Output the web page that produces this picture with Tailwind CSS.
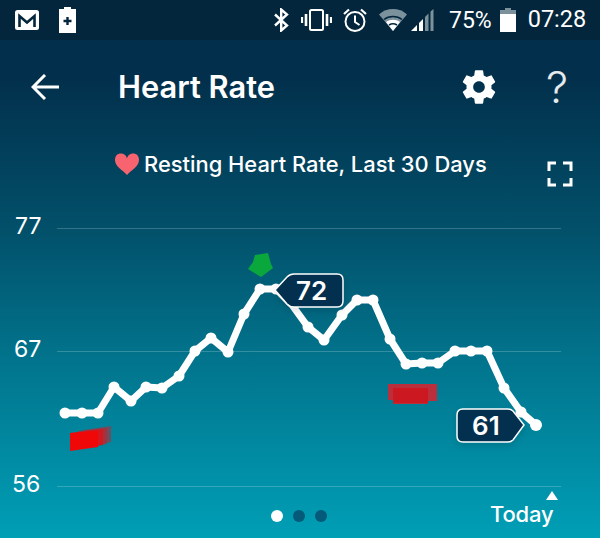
<!DOCTYPE html>
<html lang="en">
<head>
  <meta charset="UTF-8">
  <meta name="viewport" content="width=device-width, initial-scale=1.0">
  <title>Heart Rate</title>
  <script src="https://cdn.jsdelivr.net/npm/@tailwindcss/browser@4"></script>
</head>
<body class="bg-[#03263c]">
  <div class="w-[600px] h-[538px] overflow-hidden flex flex-col text-white font-['Inter',sans-serif]">
    <!-- Status bar -->
    <div class="h-10 shrink-0 bg-[#03263c] flex items-center pl-[15px] font-['Roboto',sans-serif] text-[23px]">
      <svg class="w-[24px] h-[20px]" viewBox="0 0 24 20">
        <rect width="24" height="20" rx="2.500" fill="#fff"/>
        <path d="M4.500 17V6L12 12.500L19.500 6V17" fill="none" stroke="#03263c" stroke-width="2.600"/>
      </svg>
      <svg class="w-[17px] h-[26px] ml-[20px]" viewBox="0 0 17 26">
        <path d="M5 0h7v2h5v24H0V2h5z" fill="#fff"/>
        <path d="M8.500 10v8M4.500 14h8" stroke="#03263c" stroke-width="2.400"/>
      </svg>
      <svg class="w-[15px] h-[24px] ml-[198px]" viewBox="0 0 15 24" fill="none" stroke="#fff" stroke-width="2.400">
        <path d="M1 6.500L13 17.500L7.200 22.500V1.500L13 6.500L1 17.500"/>
      </svg>
      <svg class="w-[31px] h-[22px] ml-[12px]" viewBox="0 0 31 22" fill="none" stroke="#fff">
        <rect x="9" y="1" width="13" height="20" rx="1.500" stroke-width="2"/>
        <path d="M5 5v12M26 5v12" stroke-width="2.600"/>
        <path d="M1 8v6M30 8v6" stroke-width="2.200"/>
      </svg>
      <svg class="w-[24px] h-[24px] ml-[11px]" viewBox="0 0 24 24" fill="none" stroke="#fff" stroke-width="2">
        <circle cx="12" cy="13.500" r="9.500"/>
        <path d="M12 7.500v6.500l4.500 3"/>
        <path d="M1 6L6 1.500M23 6L18 1.500" stroke-width="2.200"/>
      </svg>
      <svg class="w-[28px] h-[22px] ml-[12px]" viewBox="0 0 28 22">
        <path d="M0 5.500C8-1.800 20-1.800 28 5.500L14 22z" fill="#7b919c"/>
        <path d="M5 10.500C10 6.500 18 6.500 23 10.500" fill="none" stroke="#03263c" stroke-width="1.600"/>
        <path d="M7 13C11 10 17 10 21 13L14 22z" fill="#fff"/>
        <path d="M10 16C12.500 14.500 15.500 14.500 18 16" fill="none" stroke="#03263c" stroke-width="1.600"/>
      </svg>
      <svg class="w-[23px] h-[22px] ml-[4px]" viewBox="0 0 23 22">
        <path d="M0 22L6 16V22z" fill="#fff"/>
        <path d="M8 14L12 10V22H8z" fill="#fff"/>
        <path d="M14 8L17.500 4.500V22H14z" fill="#7b919c"/>
        <path d="M19.500 2.500L22.500 0V22H19.500z" fill="#7b919c"/>
      </svg>
      <span class="ml-[15px] leading-none">75%</span>
      <svg class="w-[16px] h-[24px] ml-[8px]" viewBox="0 0 16 24">
        <path d="M5 0h6v2h5v22H0V2h5z" fill="#7b919c"/>
        <path d="M0 6h16v18H0z" fill="#fff"/>
      </svg>
      <span class="ml-[12px] leading-none text-[23.500px]">07:28</span>
    </div>

    <div class="flex-1 flex flex-col bg-[linear-gradient(180deg,#02304c_0%,#02304c_8%,#02506a_38%,#02718a_62%,#009fb6_100%)]">
      <!-- Header -->
      <div class="h-[94px] shrink-0 flex items-center pl-[31px]">
        <svg class="w-[28px] h-[26px]" viewBox="0 0 28 26" fill="none" stroke="#fff" stroke-width="3">
          <path d="M28 13H2M14 1L2 13L14 25"/>
        </svg>
        <h1 class="ml-[59px] w-[341px] text-[30.800px] font-semibold leading-none">Heart Rate</h1>
        <svg class="w-[40px] h-[40px]" viewBox="0 0 24 24">
          <path fill="#fff" d="M19.430 12.980c.04-.32.07-.64.07-.98s-.03-.66-.07-.98l2.110-1.650c.19-.15.24-.42.12-.64l-2-3.460c-.12-.22-.39-.3-.61-.22l-2.490 1c-.52-.4-1.080-.73-1.690-.98l-.38-2.650C14.460 2.180 14.250 2 14 2h-4c-.25 0-.46.18-.49.42l-.38 2.650c-.61.25-1.170.59-1.690.98l-2.490-1c-.23-.09-.49 0-.61.22l-2 3.460c-.13.22-.07.49.12.64l2.110 1.650c-.04.32-.07.65-.07.98s.03.66.07.98l-2.110 1.650c-.19.15-.24.42-.12.64l2 3.460c.12.22.39.3.61.22l2.490-1c.52.4 1.080.73 1.690.98l.38 2.650c.03.24.24.42.49.42h4c.25 0 .46-.18.49-.42l.38-2.650c.61-.25 1.170-.59 1.690-.98l2.490 1c.23.09.49 0 .61-.22l2-3.460c.12-.22.07-.49-.12-.64l-2.110-1.650zM12 15.500c-1.930 0-3.500-1.570-3.500-3.500s1.570-3.500 3.500-3.500 3.500 1.570 3.500 3.500-1.570 3.500-3.500 3.500z"/>
        </svg>
        <span class="ml-[47px] text-[44px] font-light leading-none text-white/90">?</span>
      </div>

      <!-- Chart -->
      <svg class="block w-[600px] shrink-0" height="404" viewBox="0 134 600 404">
        <path d="M139 160c0-9-11-8-12-1.500c-1-6.500-12-7.500-12 1.500c0 7 8 10 12 15c4-5 12-8 12-15z" fill="#f7636f"/>
        <text x="144" y="172" font-size="21.900" font-weight="500" fill="#fff">Resting Heart Rate, Last 30 Days</text>
        <path d="M549 171v-8h7M563 163h8v8M571 178v7h-8M556 185h-7v-7" fill="none" stroke="#fff" stroke-width="3"/>

        <g stroke="#fff" stroke-opacity="0.2">
          <line x1="57" y1="228.500" x2="561" y2="228.500"/>
          <line x1="57" y1="351.500" x2="561" y2="351.500"/>
          <line x1="57" y1="486.500" x2="561" y2="486.500"/>
        </g>
        <g font-size="23" fill="#fff">
          <text x="15" y="234">77</text>
          <text x="14" y="357">67</text>
          <text x="12" y="492">56</text>
        </g>

        <polygon points="70,433 103,429 103,445 70,450" fill="#f00808" fill-opacity="0.8"/>
        <polygon points="78,431 107,428 107,444 78,449" fill="#e01018" fill-opacity="0.5"/>
        <polygon points="84,430 111,426 111,442 84,447" fill="#d81820" fill-opacity="0.5"/>
        <polygon points="70,433 98,431 98,447 70,451" fill="#f00808"/>
        <polygon points="388,384 437,384 437,401 428,401 428,404 393,404 393,400 388,400" fill="#bb2f3d"/>
        <polygon points="393,388 428,388 428,403 393,403" fill="#cc1820"/>
        <polygon points="255,255 268,253 271,264 273,268 261,277 248,269 253,262" fill="#0aa83c"/>

        <polyline fill="none" stroke="#fff" stroke-width="7" stroke-linejoin="round" points="65,413 82,413 98,413 114,387 131,401 146,387 162,388 179,376 195,351 211,338 228,352 244,314 260,289 276,289 292,305 308,327 324,340 342,315 357,300 373,300 390,339 406,364 422,363 438,363 455,351 471,351 487,351 504,388 521,412 536,425"/>
        <g fill="#fff">
          <circle cx="65" cy="413" r="5.500"/><circle cx="82" cy="413" r="5.500"/><circle cx="98" cy="413" r="5.500"/>
          <circle cx="114" cy="387" r="5.500"/><circle cx="131" cy="401" r="5.500"/><circle cx="146" cy="387" r="5.500"/>
          <circle cx="162" cy="388" r="5.500"/><circle cx="179" cy="376" r="5.500"/><circle cx="195" cy="351" r="5.500"/>
          <circle cx="211" cy="338" r="5.500"/><circle cx="228" cy="352" r="5.500"/><circle cx="244" cy="314" r="5.500"/>
          <circle cx="260" cy="289" r="5.500"/><circle cx="276" cy="289" r="5.500"/><circle cx="308" cy="327" r="5.500"/>
          <circle cx="324" cy="340" r="5.500"/><circle cx="342" cy="315" r="5.500"/><circle cx="357" cy="300" r="5.500"/>
          <circle cx="373" cy="300" r="5.500"/><circle cx="390" cy="339" r="5.500"/><circle cx="406" cy="364" r="5.500"/>
          <circle cx="422" cy="363" r="5.500"/><circle cx="438" cy="363" r="5.500"/><circle cx="455" cy="351" r="5.500"/>
          <circle cx="471" cy="351" r="5.500"/><circle cx="487" cy="351" r="5.500"/><circle cx="504" cy="388" r="5.500"/>
          <circle cx="521" cy="412" r="5.500"/><circle cx="536" cy="425" r="6"/>
        </g>

        <path class="drop-shadow-md" d="M275 290L287 277Q290 274 294 274H337Q343 274 343 280V301Q343 307 337 307H294Q290 307 287 304z" fill="#03304e" stroke="#fff" stroke-width="1.500"/>
        <text x="296" y="300" font-size="26" font-weight="600" fill="#fff">72</text>
        <path class="drop-shadow-md" d="M463 409H508Q511 409 513 411L524 425L513 440Q511 442 508 442H463Q457 442 457 436V415Q457 409 463 409z" fill="#03304e" stroke="#fff" stroke-width="1.500"/>
        <text x="472" y="435" font-size="26" font-weight="600" fill="#fff">61</text>

        <circle cx="277" cy="516" r="6" fill="#fff"/>
        <circle cx="299" cy="516" r="6" fill="#045a78"/>
        <circle cx="321" cy="516" r="6" fill="#045a78"/>

        <path d="M552 491L558 500H546z" fill="#fff"/>
        <text x="490" y="522" font-size="22" font-weight="500" letter-spacing="-0.200" fill="#fff">Today</text>
      </svg>
    </div>
  </div>
</body>
</html>
